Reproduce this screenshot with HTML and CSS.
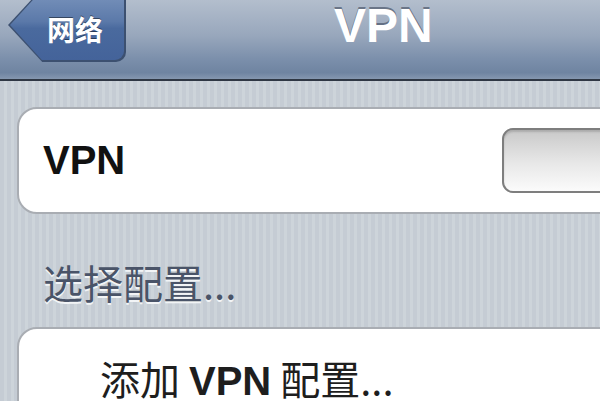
FILE: index.html
```html
<!DOCTYPE html>
<html lang="zh-CN">
<head>
    <meta charset="UTF-8">
    <meta name="viewport" content="width=device-width, initial-scale=1.0">
    <title>VPN</title>
    <link rel="stylesheet" href="styles.css">
</head>
<body>
    <header class="navbar">
        <a class="back-btn" href="#"><span class="back-face">网络</span></a>
        <h1 class="nav-title">VPN</h1>
    </header>

    <main class="content">
        <section class="group">
            <div class="cell">
                <span class="cell-label">VPN</span>
                <span class="switch"></span>
            </div>
        </section>

        <h2 class="group-header">选择配置...</h2>

        <section class="group">
            <div class="cell cell-add">添加 <b>VPN</b> 配置...</div>
        </section>
    </main>
</body>
</html>
```

FILE: styles.css
```css
body {
    margin: 0;
    width: 600px;
    height: 401px;
    overflow: hidden;
    font-family: "Liberation Sans", "Noto Sans CJK SC", sans-serif;
    background-color: #c8cfd6;
    background-image: repeating-linear-gradient(90deg, #c5ccd4 0, #c5ccd4 4px, #cdd4da 4px, #cdd4da 7px);
}

/* top bar */
.navbar {
    display: flex;
    align-items: flex-start;
    height: 79px;
    border-bottom: 2px solid #2f3744;
    background: linear-gradient(#b3becd 0%, #98a7bc 45%, #7b8fab 75%, #6f84a1 92%, #8597b0 100%);
}

.back-btn {
    display: block;
    margin: -12px 0 0 8px;
    padding: 2px;
    width: 118px;
    height: 74px;
    box-sizing: border-box;
    background: #3c5070;
    border-radius: 0 10px 10px 0;
    clip-path: polygon(0 50%, 29% 0, 100% 0, 100% 100%, 29% 100%);
    text-decoration: none;
}

.back-face {
    display: flex;
    align-items: center;
    justify-content: center;
    height: 100%;
    padding: 8px 0 0 16px;
    box-sizing: border-box;
    border-radius: 0 9px 9px 0;
    clip-path: polygon(0 50%, 28% 0, 100% 0, 100% 100%, 28% 100%);
    background: linear-gradient(#7b95bd 0%, #5b79a9 45%, #4a6a9e 55%, #44639a 100%);
    color: #fff;
    font-family: "Noto Sans CJK SC", sans-serif;
    font-size: 28px;
    font-weight: 700;
    text-shadow: 0 -1px 0 rgba(0, 0, 0, 0.45);
}

.nav-title {
    margin: 0 0 0 208px;
    font-size: 48px;
    font-weight: 700;
    line-height: 52px;
    color: #fff;
    text-shadow: 0 -2px 0 rgba(40, 50, 70, 0.5);
}

/* grouped table */
.content {
    padding-top: 26px;
}

.group {
    margin: 0 -40px 0 17px;
    background: #fff;
    border: 2px solid #a9adb3;
    border-radius: 20px;
}

.cell {
    display: flex;
    align-items: center;
    justify-content: space-between;
    height: 103px;
    padding: 0 12px 0 24px;
}

.cell-label {
    font-size: 40px;
    font-weight: 700;
    color: #111;
}

.switch {
    width: 120px;
    height: 61px;
    border: 2px solid #7e7e7e;
    border-radius: 11px;
    background: linear-gradient(#c9c9c9, #e8e8e8 55%, #fbfbfb);
    box-shadow: inset 0 2px 2px rgba(0, 0, 0, 0.15);
}

.group-header {
    margin: 44px 0 21px 43px;
    font-family: "Noto Sans CJK SC", sans-serif;
    font-size: 40px;
    font-weight: 400;
    line-height: 48px;
    color: #4a5468;
    text-shadow: 0 2px 0 #f2f4f6;
}

.cell-add {
    display: block;
    height: 120px;
    padding: 25px 0 0 81px;
    font-family: "Noto Sans CJK SC", sans-serif;
    font-size: 40px;
    line-height: 48px;
    color: #1e1e1e;
}

.cell-add b {
    font-family: "Liberation Sans", sans-serif;
    font-weight: 700;
}
```
